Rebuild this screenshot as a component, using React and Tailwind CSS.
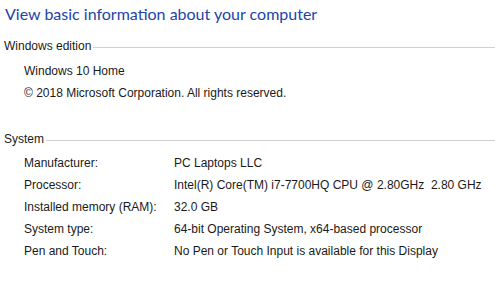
import React from "react";

const font = { fontFamily: '"Segoe UI", "Liberation Sans", Arial, sans-serif' };
const titleFont = { fontFamily: 'Lato, "Liberation Sans", sans-serif' };

const systemRows = [
  ["Manufacturer:", "PC Laptops LLC"],
  ["Processor:", "Intel(R) Core(TM) i7-7700HQ CPU @ 2.80GHz  2.80 GHz"],
  ["Installed memory (RAM):", "32.0 GB"],
  ["System type:", "64-bit Operating System, x64-based processor"],
  ["Pen and Touch:", "No Pen or Touch Input is available for this Display"],
];

function SectionHeader({ title, className }) {
  return (
    <div className={"flex items-center h-[22px] pl-[4px] " + className}>
      <span className="text-[12px] text-[#1a1a1a]">{title}</span>
      <div className="flex-1 h-px bg-[#cfcfcf] ml-[2px] mt-[2px]"></div>
    </div>
  );
}

function Row({ label, value }) {
  return (
    <div className="flex items-center h-[22px] pl-[24px] text-[12px] text-[#1a1a1a]">
      <span className="w-[150px] shrink-0">{label}</span>
      <span className="whitespace-pre">{value}</span>
    </div>
  );
}

export default function App() {
  return (
    <div className="w-[495px] h-[281px] bg-white overflow-hidden" style={font}>
      <div
        className="h-[28px] flex items-center pl-[5px] text-[16px] text-[#1d44a6]"
        style={titleFont}
      >
        View basic information about your computer
      </div>
      <SectionHeader title="Windows edition" className="mt-[7px]" />
      <div className="mt-[3px]">
        <div className="flex items-center h-[22px] pl-[24px] text-[12px] text-[#1a1a1a]">
          Windows 10 Home
        </div>
        <div className="flex items-center h-[22px] pl-[24px] text-[12px] text-[#1a1a1a]">
          © 2018 Microsoft Corporation. All rights reserved.
        </div>
      </div>
      <SectionHeader title="System" className="mt-[24px]" />
      <div className="mt-[2px]">
        {systemRows.map((r, i) => (
          <Row key={i} label={r[0]} value={r[1]} />
        ))}
      </div>
    </div>
  );
}
